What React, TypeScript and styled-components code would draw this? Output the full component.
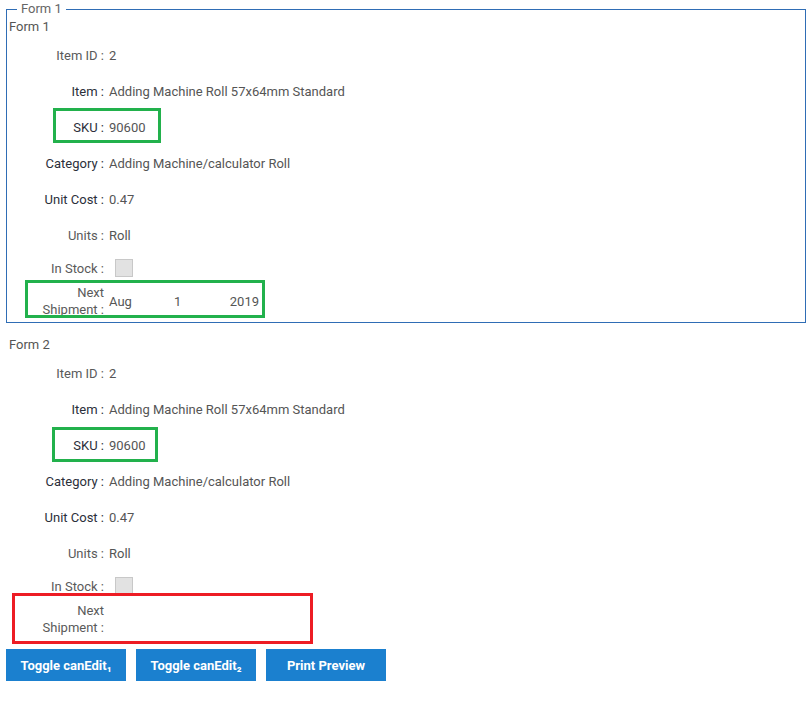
import styled, { createGlobalStyle } from 'styled-components';

const GlobalStyle = createGlobalStyle`
  body {
    margin: 0;
    font-family: Roboto, 'Liberation Sans', sans-serif;
    font-size: 13px;
    color: #555;
  }
`;

type Field = { label: string; value?: string; strong?: boolean };

const FIELDS: Field[] = [
  { label: 'Item ID', value: '2' },
  { label: 'Item', value: 'Adding Machine Roll 57x64mm Standard', strong: true },
  { label: 'SKU', value: '90600', strong: true },
  { label: 'Category', value: 'Adding Machine/calculator Roll', strong: true },
  { label: 'Unit Cost', value: '0.47', strong: true },
  { label: 'Units', value: 'Roll' },
];

type Box = { left: number; top: number; width: number; height: number; color: string };

function FormBody({
  title,
  skuBox,
  nextBox,
  showDate,
}: {
  title: string;
  skuBox: Box;
  nextBox: Box;
  showDate: boolean;
}) {
  return (
    <>
      <Title>{title}</Title>
      {FIELDS.map((f) => (
        <Row key={f.label}>
          {f.label === 'SKU' && <Highlight {...skuBox} />}
          <Label $strong={f.strong}>{f.label} :</Label>
          <Value>{f.value}</Value>
        </Row>
      ))}
      <Row $h={30}>
        <Label>In Stock :</Label>
        <Check />
      </Row>
      <Row $h={36}>
        <Highlight {...nextBox} />
        <Label>Next Shipment :</Label>
        {showDate && (
          <DateParts>
            <span>Aug</span>
            <span>1</span>
            <span>2019</span>
          </DateParts>
        )}
      </Row>
    </>
  );
}

export default function App() {
  return (
    <>
      <GlobalStyle />
      <Page>
        <Fieldset>
          <Legend>Form 1</Legend>
          <FormBody
            title="Form 1"
            showDate
            skuBox={{ left: 44, top: -1, width: 108, height: 35, color: '#22b14c' }}
            nextBox={{ left: 16, top: -3, width: 240, height: 38, color: '#22b14c' }}
          />
        </Fieldset>
        <Plain>
          <FormBody
            title="Form 2"
            showDate={false}
            skuBox={{ left: 43, top: 0, width: 106, height: 35, color: '#22b14c' }}
            nextBox={{ left: 3, top: -8, width: 301, height: 51, color: '#ed1c24' }}
          />
        </Plain>
        <Buttons>
          <Button>Toggle canEdit₁</Button>
          <Button>Toggle canEdit₂</Button>
          <Button>Print Preview</Button>
        </Buttons>
      </Page>
    </>
  );
}

const Page = styled.div`
  padding: 0 6px;
  width: 800px;
`;

const Fieldset = styled.fieldset`
  margin: 0;
  margin-top: 2px;
  padding: 0 2px 1px;
  border: 1px solid #2f6db5;
  height: 321px;
  box-sizing: border-box;
`;

const Legend = styled.legend`
  margin-left: 8px;
  padding: 0 4px;
  color: #666;
  font-size: 13px;
  line-height: 14px;
`;

const Plain = styled.div`
  padding: 11px 3px 0;
`;

const Title = styled.div`
  height: 20px;
  line-height: 20px;
  margin-top: 1px;
`;

const Row = styled.div<{ $h?: number }>`
  position: relative;
  display: flex;
  align-items: center;
  height: ${(p) => p.$h ?? 36}px;
`;

const Highlight = styled.div<Box>`
  position: absolute;
  left: ${(p) => p.left}px;
  top: ${(p) => p.top}px;
  width: ${(p) => p.width}px;
  height: ${(p) => p.height}px;
  border: 3px solid ${(p) => p.color};
  box-sizing: border-box;
  pointer-events: none;
`;

const Label = styled.div<{ $strong?: boolean }>`
  width: 66px;
  margin-left: 29px;
  text-align: right;
  line-height: 17px;
  color: ${(p) => (p.$strong ? '#2b2f3a' : '#5a5a5a')};
`;

const Value = styled.div`
  margin-left: 5px;
  color: #555;
`;

const Check = styled.div`
  margin-left: 11px;
  width: 18px;
  height: 18px;
  background: #e2e2e2;
  border: 1px solid #c8c8c8;
  box-sizing: border-box;
`;

const DateParts = styled.div`
  display: grid;
  grid-template-columns: 45px 65px 40px;
  margin-left: 5px;
  align-self: flex-end;
  margin-bottom: 10px;
  & > span:nth-child(2) {
    padding-left: 20px;
  }
  & > span:nth-child(3) {
    text-align: right;
  }
`;

const Buttons = styled.div`
  display: flex;
  gap: 10px;
  margin-top: 12px;
`;

const Button = styled.button`
  width: 120px;
  height: 32px;
  border: none;
  background: #1b80cf;
  color: #fff;
  font-family: Roboto, 'Liberation Sans', sans-serif;
  font-size: 13px;
  font-weight: 700;
  cursor: pointer;
`;
